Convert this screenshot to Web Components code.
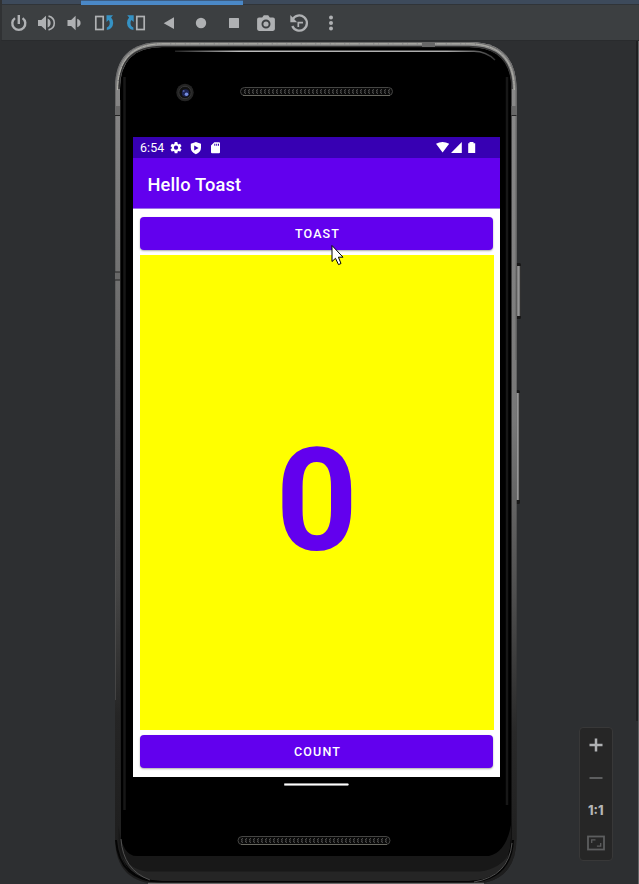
<!DOCTYPE html>
<html lang="en"><head><meta charset="utf-8"><title>Emulator</title>
<style>html,body{margin:0;height:100%;overflow:hidden;background:#2d2f31}</style></head>
<body><emulator-window></emulator-window>
<script>
const define=(name,html)=>customElements.define(name,class extends HTMLElement{
  constructor(){super();const t=document.createElement('template');t.innerHTML=html;
    this.attachShadow({mode:'open'}).append(t.content.cloneNode(true));}
});

/* Toolbar: one icon cell per action */
const cells=[
 [5,28,'<path d="M15 18.1A6.5 6.5 0 1 0 22.6 18.1" fill="none" stroke="#afb1b3" stroke-width="2.400"/><path d="M17.600 15h2.400v9h-2.400z"/>'],
 [33,28,'<path d="M38 20h3.300l4.700-4.200v14.400L41.300 26H38z"/><path d="M47.600 18.500q3 1.300 3 4.500t-3 4.500z"/><path d="M48.500 16.100Q54.300 17.500 54.300 23T48.500 29.900" fill="none" stroke="#afb1b3" stroke-width="1.600"/>'],
 [61,28,'<path d="M67.500 20h3.600l4.500-4.200v14.400L71.100 26h-3.600z"/><path d="M77.200 18.800q3.400 1.200 3.400 4.200t-3.400 4.200z"/>'],
 [89,31,'<rect x="95.800" y="16.500" width="7.400" height="13" fill="none" stroke="#afb1b3" stroke-width="1.700"/><path d="M106.500 15.300h6.500l-1.900 2.200Q113.400 20 113.200 23q-.3 5.700-6.400 7.100v-2.600q3-1.200 2.900-4.600 0-1.900-1-3l-2.200 2.100z" fill="#3592c4"/>'],
 [120,33,'<rect x="136.800" y="16.500" width="7.400" height="13" fill="none" stroke="#afb1b3" stroke-width="1.700"/><path d="M133.700 15.300h-6.500l1.900 2.200Q126.800 20 127 23q.3 5.700 6.400 7.100v-2.600q-3-1.200-2.900-4.600 0-1.900 1-3l2.200 2.100z" fill="#3592c4"/>'],
 [153,32,'<path d="M163.700 23.200 174 17.300v11.800z"/>'],
 [185,32,'<circle cx="201" cy="23" r="5.200"/>'],
 [217,33,'<rect x="229" y="18" width="10" height="10" rx=".5"/>'],
 [250,32,'<path fill-rule="evenodd" d="M259 17.500h3.200l1.600-2.300h4.400l1.600 2.300h3.200q1.900 0 1.900 1.800v9.800q0 1.800-1.900 1.800h-14q-1.900 0-1.900-1.800v-9.800q0-1.800 1.900-1.800zM266 19.500a4.500 4.500 0 1 0 0 9 4.500 4.500 0 0 0 0-9z"/><circle cx="266" cy="24" r="2.600"/>'],
 [282,33,'<path d="M292.600 19.500A7.600 7.600 0 1 1 292.300 26" fill="none" stroke="#afb1b3" stroke-width="2.300"/><path d="M290.300 15v7.200h6.800z"/><path d="M298.300 27v-4.400h4.700" fill="none" stroke="#afb1b3" stroke-width="1.700"/>'],
 [315,32,'<circle cx="331" cy="17.500" r="2"/><circle cx="331" cy="23" r="2"/><circle cx="331" cy="28.600" r="2"/>']
];
define('tool-bar',`<style>
:host{display:block;height:41px;background:#3c3f41;box-sizing:border-box;border-left:2px solid #303234;border-bottom:1px solid #292b2d}
.tab{height:5px;background:#3d4a5b;padding-left:79px;box-sizing:border-box;border-bottom:1px solid #303438}
.tab i{display:block;width:162px;height:5px;background:linear-gradient(#3d5d83 1px,#4a88c7 1px)}
.row{display:flex;padding-left:3px}svg{display:block;fill:#afb1b3}
</style><div class="tab"><i></i></div><div class="row">${cells.map(([x,w,p])=>`<svg width="${w}" height="34" viewBox="${x} 5 ${w} 34">${p}</svg>`).join('')}</div>`);

define('status-bar',`<style>
:host{display:flex;height:21px;background:#3700b3;color:#fff;font:12.400px/22px Roboto,sans-serif;align-items:stretch}
span{padding-left:7px;width:28px;letter-spacing:.1px}svg{fill:#fff;display:block}.r{margin-left:auto}
</style><span>6:54</span>
<svg width="60" height="21" viewBox="168 137 60 21">
<g transform="translate(169 140.700) scale(.585)"><path fill-rule="evenodd" d="M19.140 12.940c.04-.3.060-.61.060-.94s-.02-.64-.07-.94l2.030-1.580a.49.490 0 0 0 .12-.61l-1.920-3.320a.49.490 0 0 0-.59-.22l-2.390.96a7 7 0 0 0-1.620-.94l-.36-2.540a.48.480 0 0 0-.48-.41h-3.840a.48.480 0 0 0-.47.410l-.36 2.540a7 7 0 0 0-1.620.94l-2.390-.96a.48.480 0 0 0-.59.220L2.740 8.870a.47.470 0 0 0 .12.610l2.030 1.580a6 6 0 0 0 0 1.880l-2.030 1.580a.49.490 0 0 0-.12.610l1.920 3.320c.12.220.37.290.59.220l2.390-.96c.5.380 1.030.7 1.620.94l.36 2.540c.05.240.24.410.48.410h3.840c.24 0 .44-.17.470-.41l.36-2.540a7 7 0 0 0 1.620-.94l2.390.96c.22.080.47 0 .59-.22l1.920-3.320a.47.470 0 0 0-.12-.61zM12 15.600a3.600 3.600 0 1 1 0-7.200 3.600 3.600 0 0 1 0 7.200z"/></g>
<path fill-rule="evenodd" d="M195.900 141.900 201 143.800v4q0 4.300-5.100 6.500-5.100-2.200-5.100-6.500v-4zM194.200 145.400v5.200l4.400-2.600z"/>
<path fill-rule="evenodd" d="M214.300 142.200h4.700q1 0 1 1v9q0 1-1 1h-7q-1 0-1-1v-6.600zM214.300 143.700v2h1v-2zM216.200 143.700v2h1v-2zM218 143.700v2h1v-2z"/></svg>
<svg class="r" width="70" height="21" viewBox="430 137 70 21"><path d="M436 143.800q6.500-3.500 13.200 0l-6.600 8.700zM461.800 142.100v10.900h-10.800zM468.200 143.300h1.300v-1.200h4v1.200h1.700V153h-7z"/></svg>`);

define('app-bar',`<style>:host{display:block;height:51px;background:#6200ee;color:#fff;font:500 18.300px/53px Roboto,sans-serif;letter-spacing:.15px;padding-left:14.500px;box-sizing:border-box;border-bottom:1px solid #9e70e8}</style><slot></slot>`);
define('material-button',`<style>:host{display:block;height:33px;width:353px;border-radius:4px;box-sizing:border-box;padding-left:2px;background:#6200ee;color:#fff;font:500 12.500px/34px Roboto,sans-serif;letter-spacing:1.150px;text-align:center;box-shadow:0 1px 2px #0005}</style><slot></slot>`);
define('count-view',`<style>:host{display:block;width:353.500px;height:475px;background:#ff0;color:#6200ee;font:700 143px/475px Roboto,sans-serif;text-align:center}
slot{display:block;padding-top:8.500px}</style><slot></slot>`);
define('phone-screen',`<style>:host{display:block;width:367px;height:640px;background:#fff}
main{padding:8px 0 0 7px;display:flex;flex-direction:column;gap:5px}</style>
<status-bar></status-bar><app-bar>Hello Toast</app-bar><main><material-button>TOAST</material-button><count-view>0</count-view><material-button>COUNT</material-button></main>`);

define('phone-device',`<style>
:host{display:grid;width:406px;height:843px}
svg,.content{grid-area:1/1}svg{display:block}.content{padding:96px 0 0 18px}
</style>
<svg width="406" height="843" viewBox="115 41 406 843">
<defs>
<linearGradient id="rim" x2="0" y2="1"><stop stop-color="#8c8c8c"/><stop offset=".35" stop-color="#6a6a6a"/><stop offset=".65" stop-color="#444"/><stop offset=".8" stop-color="#252525"/><stop offset="1" stop-color="#1c1c1c"/></linearGradient>
<linearGradient id="rimRight" x2="0" y2="1"><stop stop-color="#8c8c8c"/><stop offset=".45" stop-color="#777"/><stop offset=".65" stop-color="#505050"/><stop offset=".82" stop-color="#292929"/><stop offset="1" stop-color="#1c1c1c"/></linearGradient>
<linearGradient id="key"><stop stop-color="#777"/><stop offset=".5" stop-color="#999"/><stop offset="1" stop-color="#4c4c4c"/></linearGradient>
<linearGradient id="edge"><stop stop-color="#222"/><stop offset=".2" stop-color="#bbb"/><stop offset=".85" stop-color="#aaa"/><stop offset="1" stop-color="#333"/></linearGradient>
<clipPath id="half"><path d="M315 41h206v843H315z"/></clipPath>
<pattern id="mesh" width="4" height="7" patternUnits="userSpaceOnUse"><path d="M3 1.500Q.5 2 2 3.500.5 5 3 5.500" fill="none" stroke="#5c5c5a" stroke-width="1"/></pattern>
</defs>
<rect x="514" y="263" width="7" height="56" rx="1.500" fill="#181818"/><rect x="517" y="266" width="3.500" height="50" fill="url(#key)"/>
<rect x="514" y="390" width="6" height="114" rx="1.500" fill="#181818"/><rect x="516" y="393" width="3.500" height="107" fill="url(#key)"/>
<path d="M115 88Q115 42 162 42H469Q516.500 42 516.500 89V838Q516.500 884 470 884H161Q115 884 115 838Z" fill="url(#rim)"/>
<path d="M115 88Q115 42 162 42H469Q516.500 42 516.500 89V838Q516.500 884 470 884H161Q115 884 115 838Z" fill="url(#rimRight)" clip-path="url(#half)"/>
<path d="M120 89Q120 47 162 47H469Q511.500 47 511.500 89V838Q511.500 882.500 468 882.500H162Q120 882.500 120 838Z" fill="#000"/>
<path d="M115.500 88Q115.500 42.500 162 42.500H469Q516 42.500 516 89V360M115.500 88V700" fill="none" stroke="#555" opacity=".6"/>
<path d="M119 89Q119 46.500 162 46.500H469Q512 46.500 512 89" fill="none" stroke="#333" stroke-width="1.500"/>
<path d="M117.500 90Q118 44 162 43.800H469Q514 44 514.300 90" fill="none" stroke="#b0b0a8" stroke-width="1" stroke-dasharray="9 1 4 .5"/>
<path d="M175 51.300H474Q486 51.300 495 60" fill="none" stroke="url(#edge)" stroke-width="1.400"/>
<path d="M124.500 77V810M507 77V805" stroke="#171717" stroke-width="2.500"/><path d="M120.500 100V845" stroke="#202020"/>
<path d="M115 106h5v9h-5zM511.500 106h5v9h-5zM422 42h13v5h-13zM115 272h5v8h-5z" fill="#686868"/><path d="M115 115.500h5M511.500 115.500h5M115 272h5M115 280h5" stroke="#242424"/>
<path d="M118.500 826Q122 858 139 856H489Q506 852 511 825V838Q510 879 469 881H161Q120 879 118.500 838Z" fill="#181818"/>
<path d="M122 856Q134 873 154 871.500H480Q500 869 509 854Q502 880 469 881H161Q131 880 122 856Z" fill="#252525"/>
<path d="M116 840Q119 881 162 882H469Q511 880 513 840" fill="none" stroke="#050505" stroke-width="2"/>
<path d="M121 839Q123 870 150 880M512 843Q509 876 474 882" fill="none" stroke="#505050" stroke-width="1"/>
<path d="M148 883.400H484" stroke="#6a6a6a" stroke-width="1.200"/>
<circle cx="185" cy="92.500" r="8.700" fill="#242424"/><circle cx="185" cy="92.500" r="6.200" fill="#111" stroke="#373737"/><circle cx="185.500" cy="93" r="3.700" fill="#1d2453"/><circle cx="186.500" cy="94.300" r="1.800" fill="#748cdf"/><circle cx="183.700" cy="91" r="1" fill="#4c5b9c"/>
<g stroke="#464644"><rect x="240.500" y="87.500" width="152" height="8" rx="4" fill="#090909"/><rect x="238" y="836.500" width="152" height="8" rx="4" fill="#090909"/></g>
<rect width="148" height="7" fill="url(#mesh)" transform="translate(243 88)"/><rect width="148" height="7" fill="url(#mesh)" transform="translate(240 837)"/>
<path d="M243 95.500H390M241 844.500H387" stroke="#686860"/>
<rect x="284" y="783" width="64.500" height="3" rx="1" fill="#929292"/><path d="M284.500 784.500h64" stroke="#fff"/>
</svg><div class="content"><phone-screen></phone-screen></div>`);

define('zoom-controls',`<style>:host{display:block;width:34px;height:134px;box-sizing:border-box;background:#262626;border:1px solid #383838;border-radius:4px}
svg{display:block}text{font:800 12.500px Inter,sans-serif;fill:#b5b6b7}</style>
<svg width="32" height="132" viewBox="580 728 32 132"><path d="M589.500 745h13M596 738.500v13" stroke="#afb1b3" stroke-width="2.500"/><path d="M589.500 778h13" stroke="#5d5e5f" stroke-width="2"/><text x="588" y="815" textLength="15.500">1:1</text><g fill="none" stroke="#5d5e5f"><rect x="588" y="836.500" width="16" height="13" stroke-width="1.800"/><path d="M591.700 843v-3.200h3.800M600.700 843v3.200h-3.800" stroke-width="1.300"/></g></svg>`);

define('mouse-pointer',`<style>:host{display:block}svg{display:block}</style><svg width="14" height="23" viewBox="0 0 14 23"><path d="M1 1.500V17.500L4.500 14.300 7.500 20.600 10 19.500 7.400 13.200H12Z" fill="#fff" stroke="#000"/></svg>`);

define('emulator-window',`<style>
:host{display:block;width:639px;height:884px;background:#2d2f31;position:relative;overflow:hidden}
.stage{display:flex;height:843px;padding-left:115px;box-sizing:border-box}
zoom-controls{margin:686px 0 0 58px}.edge{margin-left:auto;width:3px;height:843px;background:linear-gradient(90deg,#1f2021 2px,#626466 2px)}
.edge i{display:block;margin-top:680px;width:2px;height:163px;background:#2d2f31}
mouse-pointer{position:absolute;left:331px;top:244px}
</style><tool-bar></tool-bar><div class="stage"><phone-device></phone-device><zoom-controls></zoom-controls><div class="edge"><i></i></div></div><mouse-pointer></mouse-pointer>`);
</script></body></html>
